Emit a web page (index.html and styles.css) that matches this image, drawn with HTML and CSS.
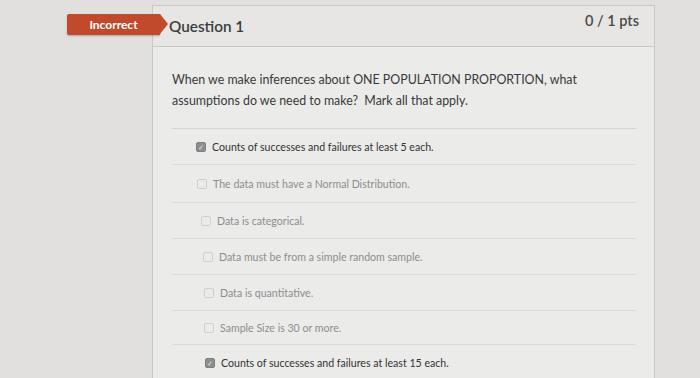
FILE: index.html
```html
<!DOCTYPE html>
<html lang="en">
  <head>
    <meta charset="UTF-8" />
    <meta name="viewport" content="width=device-width, initial-scale=1.0" />
    <title>Question 1</title>
    <link rel="stylesheet" href="styles.css">
  </head>
  <body>
    <div class="quiz">
      <div class="badge">Incorrect</div>
      <div class="question">
        <div class="question-header">
          <span class="question-name">Question 1</span>
          <span class="points">0 / 1 pts</span>
        </div>
        <div class="question-body">
          <p class="question-text">When we make inferences about ONE POPULATION PROPORTION, what assumptions do we need to make?&nbsp; Mark all that apply.</p>
          <div class="answers">
            <div class="answer selected"><span class="box">&#10003;</span>Counts of successes and failures at least 5 each.</div>
            <div class="answer"><span class="box"></span>The data must have a Normal Distribution.</div>
            <div class="answer"><span class="box"></span>Data is categorical.</div>
            <div class="answer"><span class="box"></span>Data must be from a simple random sample.</div>
            <div class="answer"><span class="box"></span>Data is quantitative.</div>
            <div class="answer"><span class="box"></span>Sample Size is 30 or more.</div>
            <div class="answer selected"><span class="box">&#10003;</span>Counts of successes and failures at least 15 each.</div>
          </div>
        </div>
      </div>
    </div>
  </body>
</html>
```

FILE: styles.css
```css
body {
  margin: 0;
  background-color: #e1e0de;
  font-family: Lato, "Open Sans", sans-serif;
  color: #3a3a3a;
  overflow: hidden;
}
.quiz {
  position: relative;
  padding: 5px 45px 0 152px;
}
.badge {
  position: absolute;
  left: 67px;
  top: 14px;
  width: 93px;
  height: 21px;
  background-color: #c24a2c;
  color: #fff;
  font-size: 12px;
  font-weight: bold;
  line-height: 21px;
  text-align: center;
  border-radius: 2px 0 0 2px;
  box-shadow: 0 1px 2px rgba(0, 0, 0, 0.25);
}
.badge::after {
  content: "";
  position: absolute;
  right: -8px;
  top: 0;
  border-top: 10.5px solid transparent;
  border-bottom: 10.5px solid transparent;
  border-left: 8px solid #c24a2c;
}
.question {
  border: 1px solid #c9c8c6;
  border-bottom: none;
  background-color: #ebebe9;
}
.question-header {
  display: flex;
  justify-content: space-between;
  height: 40px;
  padding: 0 15px 0 16px;
  background-color: #e7e6e4;
  border-bottom: 1px solid #c9c8c6;
}
.question-name {
  font-size: 15.3px;
  font-weight: 600;
  color: #3b3d40;
  margin-top: 11px;
}
.points {
  font-size: 14.5px;
  font-weight: 600;
  color: #4a4b4d;
  margin-top: 6px;
}
.question-body {
  padding: 22px 18px 0 19px;
}
.question-text {
  margin: 0;
  font-size: 12.4px;
  line-height: 21px;
  color: #38393b;
  padding-bottom: 17px;
  border-bottom: 1px solid #d6d5d3;
}
.answer {
  display: flex;
  align-items: center;
  height: 35px;
  padding-left: 25px;
  font-size: 10.6px;
  color: #8d8d8d;
  border-bottom: 1px solid #dcdbd9;
}
.answer:nth-child(1) { padding-left: 24px; }
.answer:nth-child(2) { padding-left: 25px; height: 37px; }
.answer:nth-child(3) { padding-left: 29px; }
.answer:nth-child(4) { padding-left: 31px; }
.answer:nth-child(5) { padding-left: 32px; }
.answer:nth-child(6) { padding-left: 32px; height: 33px; }
.answer:nth-child(7) { padding-left: 33px; }
.answer.selected {
  color: #333;
}
.box {
  display: inline-block;
  width: 8px;
  height: 8px;
  margin-right: 6px;
  border: 1px solid #cfcfcd;
  border-radius: 2px;
  background-color: #ecebe9;
  font-size: 7px;
  line-height: 8px;
  text-align: center;
  color: #e6e6e6;
}
.answer.selected .box {
  background-color: #8c8e90;
  border-color: #7d7f81;
}
```
